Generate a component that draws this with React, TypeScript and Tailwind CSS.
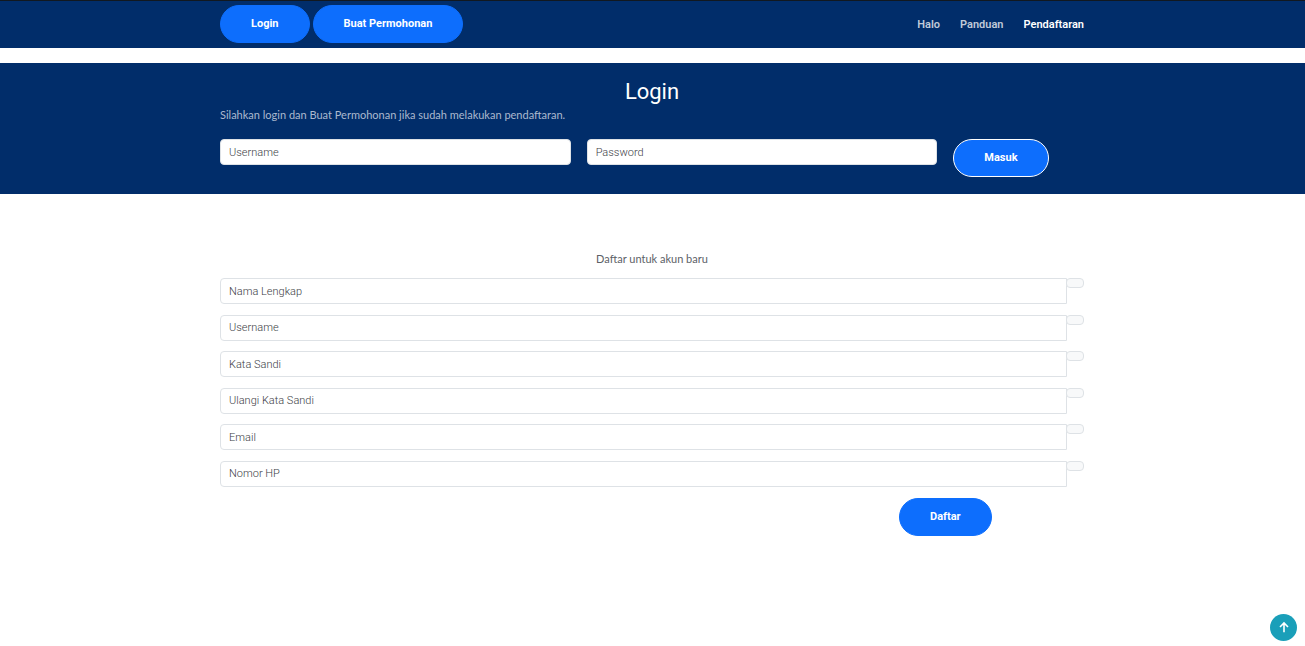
import React from "react";

const container = "mx-auto w-full max-w-[881px] pl-2 pr-[9px]";
const pill =
  "h-[38px] rounded-full border bg-[#0d6efd] px-[30px] font-['Roboto',sans-serif] text-[11px] font-bold text-white";
const field =
  "h-[26px] w-full min-w-0 bg-white px-2 font-['Roboto',sans-serif] text-[11px] font-light text-[#212529] border border-[#dee2e6] placeholder:text-[#3c4046]";

const fields = [
  { name: "nama", label: "Nama Lengkap", type: "text" },
  { name: "username", label: "Username", type: "text" },
  { name: "sandi", label: "Kata Sandi", type: "password" },
  { name: "ulangi", label: "Ulangi Kata Sandi", type: "password" },
  { name: "email", label: "Email", type: "email" },
  { name: "hp", label: "Nomor HP", type: "tel" },
];

const links = [
  { label: "Halo", active: false },
  { label: "Panduan", active: false },
  { label: "Pendaftaran", active: true },
];

function Navbar() {
  return (
    <header className="border-t border-[#111820] bg-[#012d6a]">
      <div className={`${container} flex items-center justify-between pt-1 pb-[5px]`}>
        <div className="flex gap-[3px]">
          <button type="button" className={`${pill} border-[#0d6efd]`}>Login</button>
          <button type="button" className={`${pill} border-[#0d6efd]`}>Buat Permohonan</button>
        </div>
        <nav className="flex gap-5 pt-0.5 font-['Roboto',sans-serif] text-[11px] font-semibold">
          {links.map((l) => (
            <a key={l.label} href="#" className={l.active ? "text-white" : "text-[#c0cad9]"}>
              {l.label}
            </a>
          ))}
        </nav>
      </div>
    </header>
  );
}

function LoginSection() {
  return (
    <section className="mt-[15px] bg-[#012d6a] pt-[17px] pb-[17px]">
      <div className={container}>
        <h1 className="text-center font-['Roboto',sans-serif] text-[22px] leading-6 text-white">Login</h1>
        <p className="mt-[3px] mb-4 text-[11px] leading-4 text-[#abb9cf]">
          Silahkan login dan Buat Permohonan jika sudah melakukan pendaftaran.
        </p>
        <form className="grid grid-cols-12 items-start gap-x-4">
          <input className={`${field} col-span-5 rounded`} type="text" placeholder="Username" aria-label="Username" />
          <input className={`${field} col-span-5 rounded`} type="password" placeholder="Password" aria-label="Password" />
          <div className="col-span-2">
            <button type="button" className={`${pill} border-white`}>Masuk</button>
          </div>
        </form>
      </div>
    </section>
  );
}

function RegisterSection() {
  return (
    <section className={`${container} pt-14`}>
      <h2 className="text-center text-[11px] leading-[18px] text-[#5c6167]">Daftar untuk akun baru</h2>
      <form className="mt-2.5">
        <div className="flex h-[209px] flex-col justify-between">
          {fields.map((f) => (
            <div key={f.name} className="flex items-start">
              <input
                className={`${field} flex-1 rounded-l`}
                type={f.type}
                name={f.name}
                placeholder={f.label}
                aria-label={f.label}
              />
              <span className="-ml-px h-2.5 w-[18px] rounded border border-[#dee2e6] bg-[#f8f9fa]" />
            </div>
          ))}
        </div>
        <div className="mt-[11px] grid grid-cols-3 gap-x-4">
          <div className="col-start-3 text-center">
            <button type="button" className={`${pill} border-[#0d6efd]`}>Daftar</button>
          </div>
        </div>
      </form>
    </section>
  );
}

export default function App() {
  return (
    <div className="min-h-screen bg-white font-['Lato',sans-serif]">
      <Navbar />
      <main>
        <LoginSection />
        <RegisterSection />
      </main>
      <a
        href="#"
        aria-label="Kembali ke atas"
        className="fixed right-2 bottom-[5px] flex size-[27px] items-center justify-center rounded-full bg-[#1a9fb9] text-white"
      >
        <svg viewBox="0 0 16 16" className="size-4" fill="none" stroke="currentColor" strokeWidth="1.6">
          <path d="M8 12.3V3M4 7 8 3l4 4" />
        </svg>
      </a>
    </div>
  );
}
